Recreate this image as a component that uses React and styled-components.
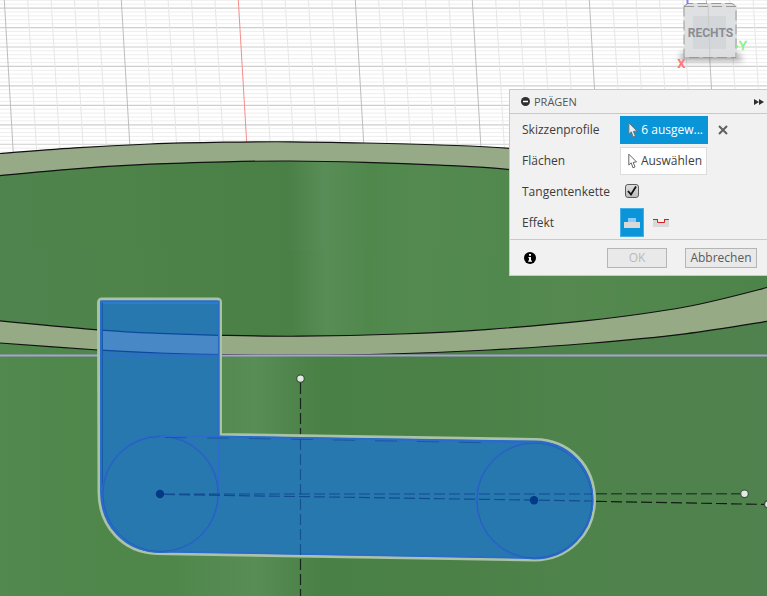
import React, { useState } from "react";
import styled, { createGlobalStyle, css } from "styled-components";

const GlobalStyle = createGlobalStyle`
  *, *::before, *::after { box-sizing: border-box; }
  body {
    margin: 0;
    font-family: "Open Sans", "Noto Sans", sans-serif;
    font-size: 12px;
    line-height: 16px;
    color: #3c3c3c;
  }
  button, input { font: inherit; margin: 0; }
`;

const Workspace = styled.main`
  position: relative;
  display: flex;
  justify-content: flex-end;
  align-items: flex-start;
  min-height: 100vh;
  padding-top: 89px;
  overflow: hidden;
`;

const Canvas = styled.svg`
  position: absolute;
  inset: 0;
  width: 100%;
  height: 100%;
`;

const Panel = styled.form`
  position: relative;
  flex: 0 1 258px;
  background: #f1f1f1;
  border: solid #c9c9c9;
  border-width: 1px 0 1px 1px;
`;

const PanelHeader = styled.header`
  display: flex;
  align-items: center;
  gap: 4px;
  height: 24px;
  padding: 0 3px 0 11px;
  border-bottom: 1px solid #c9c9c9;
`;

const Title = styled.h1`
  flex: 1;
  margin: 0;
  font-size: 11px;
  line-height: 16px;
  font-weight: 400;
  color: #555;
`;

const IconButton = styled.button`
  display: flex;
  padding: 0;
  border: 0;
  background: none;
  color: #2e2e2e;
`;

const Rows = styled.div`
  display: grid;
  grid-auto-rows: 31px;
  padding: 0 12px 1px;
`;

const Row = styled.div`
  display: grid;
  grid-template-columns: 98px 1fr;
  align-items: center;
`;

const Controls = styled.div`
  display: flex;
  align-items: center;
  gap: 10px;
`;

const PickButton = styled.button`
  display: flex;
  align-items: center;
  gap: 3px;
  height: 28px;
  width: ${(p) => (p.$active ? 88 : 87)}px;
  padding: 0 4px 0 6px;
  white-space: nowrap;
  border: 1px solid ${(p) => (p.$active ? "#0a93d6" : "#dcdcdc")};
  background: ${(p) => (p.$active ? "#0a95d8" : "#fff")};
  color: ${(p) => (p.$active ? "#fff" : "#3c3c3c")};
`;

const Check = styled.input`
  appearance: none;
  width: 14px;
  height: 14px;
  border: 1px solid #5c5c5c;
  border-radius: 3px;
  background: linear-gradient(#dedede, #bdbdbd);
`;

const CheckWrap = styled.span`
  display: grid;
  padding: 0 0 2px 5px;
  > * { grid-area: 1 / 1; }
  > svg { pointer-events: none; }
`;

const Choices = styled.div`
  display: flex;
  gap: 5px;
`;

const Choice = styled.label`
  display: grid;
  place-items: center;
  width: 24px;
  height: 29px;
  ${(p) =>
    p.$active &&
    css`
      background: #0a95d8;
      border: 1px solid #42b0e6;
    `}
`;

const HiddenRadio = styled.input`
  appearance: none;
  position: absolute;
  width: 1px;
  height: 1px;
`;

const PanelFooter = styled.footer`
  display: flex;
  align-items: center;
  gap: 18px;
  height: 36px;
  padding: 0 10px 0 14px;
  border-top: 1px solid #c9c9c9;
`;

const InfoButton = styled(IconButton)`
  margin-right: auto;
`;

const FooterButton = styled.button`
  width: ${(p) => (p.$wide ? 72 : 60)}px;
  height: 20px;
  padding: 0;
  border: 1px solid #b5b5b5;
  background: #e9e9e9;
  font-size: 12px;
  line-height: 16px;
  color: ${(p) => (p.disabled ? "#b9b9b9" : "#5a5a5a")};
`;

const curve = (pts) =>
  pts.slice(0, -1).reduce((d, p, i) => {
    const a = pts[i - 1] || p;
    const b = pts[i + 1];
    const c = pts[i + 2] || b;
    return `${d}C${p[0] + (b[0] - a[0]) / 6} ${p[1] + (b[1] - a[1]) / 6} ${b[0] - (c[0] - p[0]) / 6} ${b[1] - (c[1] - p[1]) / 6} ${b[0]} ${b[1]}`;
  }, `M${pts[0][0]} ${pts[0][1]}`);

const rimTopOuter = curve([[-20, 155.5], [0, 153.5], [75, 147.8], [150, 144], [225, 142.2], [290, 141.8], [365, 143], [440, 145], [510, 148.3], [640, 160], [790, 185]]);
const rimTopInner = curve([[-20, 178], [0, 175.6], [75, 168.8], [150, 164.2], [225, 161.8], [290, 161], [365, 162.3], [440, 165.2], [510, 169.6], [640, 185], [790, 215]]);
const rimLowInner = curve([[-20, 318], [0, 320.8], [98, 329.8], [160, 333.4], [220, 335.3], [300, 336.2], [400, 334], [489, 329.3], [587, 320.7], [685, 307], [767, 287.5], [790, 280]]);
const rimLowOuter = curve([[-20, 341], [0, 343], [98, 350], [160, 353], [220, 354.6], [300, 355.2], [389, 354], [489, 350], [587, 343.5], [685, 333.8], [767, 321.3], [790, 317]]);

const outline = "M102 299H217Q220.500 299 220.500 302.500V434.500L535 439.500C570 440 594.500 466 594.500 500C594.500 534 568 560 534 560L157 553.500C123 553 99 526 99 492L98.500 303Q98.500 299 102 299Z";
const profile = "M101 301.500H218.800V436.500L535 441.500C568 442 592.500 468 592.500 500C592.500 532 567 558 534 558L158 551.500C126 551.500 101 526 101 492Z";

const horizontals = Array.from({ length: 42 }, (_, i) => i);
const verticals = Array.from({ length: 34 }, (_, i) => i);

function Grid() {
  return (
    <g>
      {horizontals.map((i) => (
        <line key={i} x1="0" x2="767" y1={0.3 + i * 3.89} y2={0.3 + i * 3.89} strokeWidth={i % 5 === 2 ? 1.2 : 1} stroke={i % 5 === 2 ? "#cecece" : "#eeeeee"} />
      ))}
      {verticals.map((i) => {
        const x = 4.3 + i * 23.4;
        const major = i % 5 === 0;
        return <line key={i} x1={x} y1="0" x2={x + 9.4} y2="160" strokeWidth="1" stroke={i === 10 ? "#f58c8c" : major ? "#bdbdbd" : "#e6e6e6"} />;
      })}
    </g>
  );
}

function ViewCube() {
  return (
    <g>
      <path d="M682 53H738L743 61H680Z" fill="#555" opacity="0.5" filter="url(#soft)" />
      <path d="M684 6L688 3H733L737 6V57H684Z" fill="#dedfe0" fillOpacity="0.96" />
      <rect x="693" y="16" width="33" height="33" fill="#cdd0d5" opacity="0.6" />
      <path d="M708 4L710 58" stroke="#cacbcd" strokeWidth="1" />
      <path d="M684 6.500H736V57.500H684ZM684 6L688 3.500H732L737 7" fill="none" stroke="#999" strokeWidth="1" strokeDasharray="10 4" />
      <text x="710.500" y="37" textAnchor="middle" fontFamily="Roboto, sans-serif" fontWeight="700" fontSize="12" fill="#898d94">RECHTS</text>
      <path d="M687.500 0V4" stroke="#8080f5" strokeWidth="2" />
      <text x="681.500" y="68" textAnchor="middle" fontFamily="Roboto, sans-serif" fontWeight="700" fontSize="13" fill="#ff7676">X</text>
      <text x="743" y="50" textAnchor="middle" fontFamily="Roboto, sans-serif" fontSize="13" fill="#7df57d" stroke="#7df57d" strokeWidth="0.400">Y</text>
      <circle cx="737" cy="46.500" r="1.200" fill="#7df57d" />
    </g>
  );
}

function Scene() {
  return (
    <Canvas viewBox="0 0 767 596" preserveAspectRatio="xMidYMid slice" aria-hidden="true">
      <defs>
        <linearGradient id="inside">
          <stop offset="0" stopColor="#50844f" />
          <stop offset="0.150" stopColor="#4e834a" />
          <stop offset="0.380" stopColor="#4a8046" />
          <stop offset="0.425" stopColor="#598d57" />
          <stop offset="0.480" stopColor="#50884c" />
          <stop offset="0.540" stopColor="#548a50" />
          <stop offset="0.660" stopColor="#51884d" />
          <stop offset="0.730" stopColor="#55894f" />
          <stop offset="1" stopColor="#4d8449" />
        </linearGradient>
        <linearGradient id="body">
          <stop offset="0" stopColor="#52894f" />
          <stop offset="0.170" stopColor="#4f864a" />
          <stop offset="0.240" stopColor="#4f874b" />
          <stop offset="0.340" stopColor="#588d56" />
          <stop offset="0.420" stopColor="#498045" />
          <stop offset="0.600" stopColor="#4b8147" />
          <stop offset="0.750" stopColor="#4f834c" />
          <stop offset="0.970" stopColor="#4f824e" />
          <stop offset="1" stopColor="#44734a" />
        </linearGradient>
        <filter id="soft" x="-30%" y="-100%" width="160%" height="300%"><feGaussianBlur stdDeviation="3" /></filter>
        <clipPath id="selection"><path d={profile} /></clipPath>
      </defs>
      <rect width="767" height="596" fill="#fff" />
      <Grid />
      <path d={`${rimTopOuter}V330H-20Z`} fill="#96aa88" />
      <path d={`${rimTopInner}V330H-20Z`} fill="url(#inside)" />
      <rect y="250" width="767" height="120" fill="url(#inside)" />
      <path d={`${rimLowInner}V400H-20Z`} fill="#96aa85" />
      <path d={`${rimLowOuter}V620H-20Z`} fill="url(#body)" />
      <g fill="none" stroke="#111" strokeWidth="1.200">
        <path d={rimTopOuter} />
        <path d={rimTopInner} />
        <path d={rimLowInner} />
        <path d={rimLowOuter} />
      </g>
      <path d="M0 355.500H767" stroke="#aca0d6" strokeWidth="2" />
      <path d={outline} fill="#2878b0" stroke="#a8c3a6" strokeWidth="3" />
      <g clipPath="url(#selection)">
        <rect x="98" y="298" width="500" height="265" fill="#2878b0" />
        <path d={`${rimLowInner}L790 317L587 343.500L489 350L300 355L220 354.600L160 353L98 350L0 343Z`} fill="#4888c6" />
        <path d={rimLowInner} fill="none" stroke="#0a4a9c" strokeWidth="1.200" />
        <path d={rimLowOuter} fill="none" stroke="#0a4a9c" strokeWidth="1.200" />
        <path d="M98 355.500H220" stroke="#306ccc" strokeWidth="2" />
      </g>
      <g fill="none" stroke="#2c6acb">
        <path d={profile} strokeWidth="1.800" />
        <path d="M103 303H218" stroke="#2b86e4" strokeWidth="1" />
        <path d="M102.500 303V494" stroke="#175ca9" strokeWidth="1" />
        <path d="M218.500 436V494" strokeWidth="1.500" />
        <circle cx="160.500" cy="494" r="58" strokeWidth="1.800" />
        <circle cx="534.500" cy="500.500" r="58" strokeWidth="1.800" />
        <circle cx="160.500" cy="494" r="57.500" stroke="#155199" strokeWidth="0.400" />
        <circle cx="534.500" cy="500.500" r="57.500" stroke="#155199" strokeWidth="0.400" />
        <path d="M160 436.500H220L534 442.500" strokeWidth="1.500" />
        <path d="M165 437.500L250 438.500L500 443" stroke="#155199" strokeWidth="0.800" strokeDasharray="22 20" />
      </g>
      <g fill="none" strokeWidth="1.200" strokeDasharray="11 4">
        <path d="M300.500 383V434" stroke="#17241a" />
        <path d="M300.500 439V557" stroke="#155292" />
        <path d="M300.500 559V596" stroke="#17241a" />
        <path d="M164 494H592M164 494.500L592 501" stroke="#124b94" />
        <path d="M596 493.800H740" stroke="#26422b" strokeWidth="1.500" />
        <path d="M596 501.300L765 504.400" stroke="#111c13" />
      </g>
      <circle cx="160" cy="494" r="4.200" fill="#023a86" />
      <circle cx="534" cy="500.300" r="4.200" fill="#023a86" />
      <g fill="#e3eae3" stroke="#36543a" strokeWidth="1.200">
        <circle cx="300.500" cy="378.600" r="3.800" />
        <circle cx="744.500" cy="493.800" r="3.800" />
        <circle cx="768" cy="504.400" r="3.500" />
      </g>
      <ViewCube />
    </Canvas>
  );
}

function CursorIcon({ filled }) {
  return (
    <svg width="12" height="18" viewBox="0 0 12 18" aria-hidden="true">
      <path d="M2 1.500V13.500L4.600 11L6.600 16.500L8.900 15.500L6.800 10.500L10.500 10Z" fill={filled ? "#e8eef2" : "#fff"} stroke={filled ? "#65717a" : "#555"} strokeWidth="1" />
    </svg>
  );
}

export default function App() {
  const [chain, setChain] = useState(true);
  const [effect, setEffect] = useState("raised");
  return (
    <Workspace>
      <GlobalStyle />
      <Scene />
      <Panel onSubmit={(e) => e.preventDefault()}>
        <PanelHeader>
          <IconButton type="button" aria-label="Einklappen">
            <svg width="9" height="9" viewBox="0 0 9 9"><circle cx="4.500" cy="4.500" r="4.500" fill="currentColor" /><path d="M2 4.500H7" stroke="#fff" strokeWidth="1.500" /></svg>
          </IconButton>
          <Title>PRÄGEN</Title>
          <IconButton type="button" aria-label="Andocken">
            <svg width="10" height="8" viewBox="0 0 10 8"><path d="M0 1L5 4L0 7ZM5 1L10 4L5 7Z" fill="currentColor" /></svg>
          </IconButton>
        </PanelHeader>
        <Rows>
          <Row>
            <label htmlFor="profiles">Skizzenprofile</label>
            <Controls>
              <PickButton id="profiles" type="button" $active><CursorIcon filled />6 ausgew...</PickButton>
              <IconButton type="button" aria-label="Auswahl löschen">
                <svg width="10" height="10" viewBox="0 0 10 10"><path d="M1 1L9 9M9 1L1 9" stroke="#606060" strokeWidth="2" /></svg>
              </IconButton>
            </Controls>
          </Row>
          <Row>
            <label htmlFor="faces">Flächen</label>
            <Controls>
              <PickButton id="faces" type="button"><CursorIcon />Auswählen</PickButton>
            </Controls>
          </Row>
          <Row>
            <label htmlFor="chain">Tangentenkette</label>
            <Controls>
              <CheckWrap>
                <Check id="chain" type="checkbox" checked={chain} onChange={(e) => setChain(e.target.checked)} />
                {chain && <svg width="14" height="14" viewBox="0 0 14 14"><path d="M3 7L6 10.500L11 2.500" fill="none" stroke="#111" strokeWidth="1.800" /></svg>}
              </CheckWrap>
            </Controls>
          </Row>
          <Row role="radiogroup" aria-labelledby="effect">
            <span id="effect">Effekt</span>
            <Choices>
              <Choice $active={effect === "raised"}>
                <HiddenRadio type="radio" name="effect" aria-label="Erhaben" checked={effect === "raised"} onChange={() => setEffect("raised")} />
                <svg width="16" height="10" viewBox="0 0 16 10"><path d="M4 0H12V4H4Z" fill="#8acbff" /><path d="M0 4H16V10H0Z" fill="#d9d9d9" /></svg>
              </Choice>
              <Choice $active={effect === "sunken"}>
                <HiddenRadio type="radio" name="effect" aria-label="Vertieft" checked={effect === "sunken"} onChange={() => setEffect("sunken")} />
                <svg width="16" height="8" viewBox="0 0 16 8"><path d="M0 1H4V4H12V1H16V8H0Z" fill="#d9d9d9" /><path d="M0 .5H4M12 .5H16" stroke="#555" /><path d="M4.500 0V3.500H11.500V0" fill="none" stroke="#d4201f" /></svg>
              </Choice>
            </Choices>
          </Row>
        </Rows>
        <PanelFooter>
          <InfoButton type="button" aria-label="Info">
            <svg width="12" height="12" viewBox="0 0 12 12"><circle cx="6" cy="6" r="6" fill="#000" /><path d="M5 2H7V3.800H5ZM4.500 5H7V8.500H8V9.700H4.200V8.500H5V6.200H4.500Z" fill="#fff" /></svg>
          </InfoButton>
          <FooterButton type="submit" disabled>OK</FooterButton>
          <FooterButton type="button" $wide>Abbrechen</FooterButton>
        </PanelFooter>
      </Panel>
    </Workspace>
  );
}
